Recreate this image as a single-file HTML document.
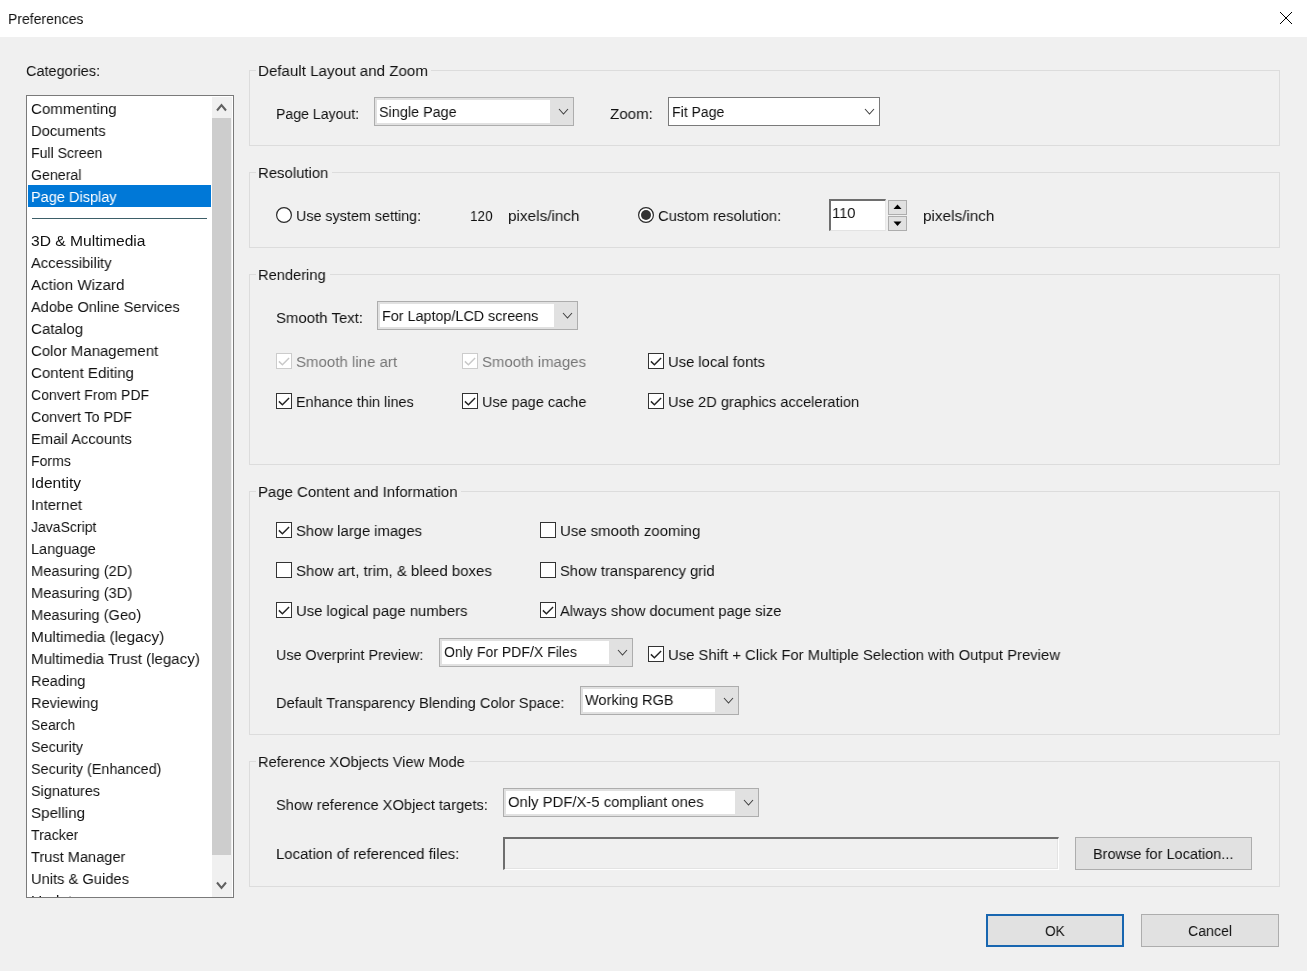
<!DOCTYPE html>
<html><head><meta charset="utf-8"><style>
html,body{margin:0;padding:0;}
body{width:1307px;height:971px;background:#f0f0f0;position:relative;overflow:hidden;font-family:"Liberation Sans",sans-serif;}
.a{position:absolute;box-sizing:border-box;}
.t{position:absolute;white-space:nowrap;will-change:transform;font-size:15px;line-height:20px;transform-origin:0 0;}
svg.a{display:block;}
</style></head><body>
<div class="a" style="left:0px;top:0px;width:1307px;height:37px;background:#ffffff;"></div>
<div class="t" style="left:8.20px;top:9.40px;color:#111111;font-size:15.5px;transform:scaleX(0.9024);">Preferences</div>
<svg class="a" style="left:1279px;top:11px" width="14" height="14" viewBox="0 0 14 14"><path d="M1 1 L13 13 M13 1 L1 13" stroke="#000" stroke-width="1"/></svg>
<div class="t" style="left:26.10px;top:61.40px;color:#111111;font-size:15.5px;transform:scaleX(0.9342);">Categories:</div>
<div class="a" style="left:26px;top:95px;width:208px;height:803px;background:#ffffff;border:1px solid #7a7a7a;"></div>
<div class="a" style="left:27px;top:96px;width:206px;height:801px;overflow:hidden">
<div class="a" style="left:1px;top:89px;width:183px;height:22px;background:#0078d7;"></div>
<div class="t" style="left:4.00px;top:3.40px;color:#111111;font-size:15.5px;transform:scaleX(0.9739);">Commenting</div>
<div class="t" style="left:4.00px;top:25.40px;color:#111111;font-size:15.5px;transform:scaleX(0.9519);">Documents</div>
<div class="t" style="left:4.00px;top:47.40px;color:#111111;font-size:15.5px;transform:scaleX(0.9103);">Full Screen</div>
<div class="t" style="left:4.00px;top:69.40px;color:#111111;font-size:15.5px;transform:scaleX(0.9145);">General</div>
<div class="t" style="left:4.00px;top:91.40px;color:#ffffff;font-size:15.5px;transform:scaleX(0.9370);">Page Display</div>
<div class="a" style="left:5px;top:122px;width:175px;height:1px;background:#3d5e68;"></div>
<div class="t" style="left:4.00px;top:135.40px;color:#111111;font-size:15.5px;transform:scaleX(1.0070);">3D &amp; Multimedia</div>
<div class="t" style="left:4.00px;top:157.40px;color:#111111;font-size:15.5px;transform:scaleX(0.9541);">Accessibility</div>
<div class="t" style="left:4.00px;top:179.40px;color:#111111;font-size:15.5px;transform:scaleX(0.9771);">Action Wizard</div>
<div class="t" style="left:4.00px;top:201.40px;color:#111111;font-size:15.5px;transform:scaleX(0.9430);">Adobe Online Services</div>
<div class="t" style="left:4.00px;top:223.40px;color:#111111;font-size:15.5px;transform:scaleX(0.9755);">Catalog</div>
<div class="t" style="left:4.00px;top:245.40px;color:#111111;font-size:15.5px;transform:scaleX(0.9647);">Color Management</div>
<div class="t" style="left:4.00px;top:267.40px;color:#111111;font-size:15.5px;transform:scaleX(0.9717);">Content Editing</div>
<div class="t" style="left:4.00px;top:289.40px;color:#111111;font-size:15.5px;transform:scaleX(0.9084);">Convert From PDF</div>
<div class="t" style="left:4.00px;top:311.40px;color:#111111;font-size:15.5px;transform:scaleX(0.9180);">Convert To PDF</div>
<div class="t" style="left:4.00px;top:333.40px;color:#111111;font-size:15.5px;transform:scaleX(0.9509);">Email Accounts</div>
<div class="t" style="left:4.00px;top:355.40px;color:#111111;font-size:15.5px;transform:scaleX(0.9068);">Forms</div>
<div class="t" style="left:4.00px;top:377.40px;color:#111111;font-size:15.5px;">Identity</div>
<div class="t" style="left:4.00px;top:399.40px;color:#111111;font-size:15.5px;transform:scaleX(0.9698);">Internet</div>
<div class="t" style="left:4.00px;top:421.40px;color:#111111;font-size:15.5px;transform:scaleX(0.9041);">JavaScript</div>
<div class="t" style="left:4.00px;top:443.40px;color:#111111;font-size:15.5px;transform:scaleX(0.9391);">Language</div>
<div class="t" style="left:4.00px;top:465.40px;color:#111111;font-size:15.5px;transform:scaleX(0.9477);">Measuring (2D)</div>
<div class="t" style="left:4.00px;top:487.40px;color:#111111;font-size:15.5px;transform:scaleX(0.9477);">Measuring (3D)</div>
<div class="t" style="left:4.00px;top:509.40px;color:#111111;font-size:15.5px;transform:scaleX(0.9466);">Measuring (Geo)</div>
<div class="t" style="left:4.00px;top:531.40px;color:#111111;font-size:15.5px;transform:scaleX(0.9910);">Multimedia (legacy)</div>
<div class="t" style="left:4.00px;top:553.40px;color:#111111;font-size:15.5px;transform:scaleX(0.9751);">Multimedia Trust (legacy)</div>
<div class="t" style="left:4.00px;top:575.40px;color:#111111;font-size:15.5px;transform:scaleX(0.9431);">Reading</div>
<div class="t" style="left:4.00px;top:597.40px;color:#111111;font-size:15.5px;transform:scaleX(0.9403);">Reviewing</div>
<div class="t" style="left:4.00px;top:619.40px;color:#111111;font-size:15.5px;transform:scaleX(0.9000);">Search</div>
<div class="t" style="left:4.00px;top:641.40px;color:#111111;font-size:15.5px;transform:scaleX(0.9286);">Security</div>
<div class="t" style="left:4.00px;top:663.40px;color:#111111;font-size:15.5px;transform:scaleX(0.9286);">Security (Enhanced)</div>
<div class="t" style="left:4.00px;top:685.40px;color:#111111;font-size:15.5px;transform:scaleX(0.9324);">Signatures</div>
<div class="t" style="left:4.00px;top:707.40px;color:#111111;font-size:15.5px;transform:scaleX(0.9800);">Spelling</div>
<div class="t" style="left:4.00px;top:729.40px;color:#111111;font-size:15.5px;transform:scaleX(0.9113);">Tracker</div>
<div class="t" style="left:4.00px;top:751.40px;color:#111111;font-size:15.5px;transform:scaleX(0.9416);">Trust Manager</div>
<div class="t" style="left:4.00px;top:773.40px;color:#111111;font-size:15.5px;transform:scaleX(0.9471);">Units &amp; Guides</div>
<div class="t" style="left:4.00px;top:795.40px;color:#111111;font-size:15.5px;">Updater</div>
<div class="a" style="left:185px;top:1px;width:20px;height:800px;background:#f0f0f0;"></div>
<div class="a" style="left:185px;top:22px;width:19px;height:737px;background:#cdcdcd;"></div>
<svg class="a" style="left:188px;top:6px" width="13" height="10" viewBox="0 0 13 10"><path d="M2 8.5 L6.5 3 L11 8.5" fill="none" stroke="#606060" stroke-width="2"/></svg>
<svg class="a" style="left:188px;top:785px" width="13" height="10" viewBox="0 0 13 10"><path d="M2 1.5 L6.5 7 L11 1.5" fill="none" stroke="#606060" stroke-width="2"/></svg>
</div>
<div class="a" style="left:249px;top:70px;width:1031px;height:76px;border:1px solid #dcdcdc;"></div>
<div class="a" style="left:256px;top:68px;width:175px;height:5px;background:#f0f0f0;"></div>
<div class="t" style="left:258.00px;top:61.30px;color:#111111;font-size:15.5px;transform:scaleX(0.9759);">Default Layout and Zoom</div>
<div class="t" style="left:276.10px;top:104.10px;color:#111111;font-size:15.5px;transform:scaleX(0.9099);">Page Layout:</div>
<div class="a" style="left:374px;top:97px;width:200px;height:29px;background:#e1e1e1;border:1px solid #adadad;"></div>
<div class="a" style="left:377px;top:100px;width:173px;height:23px;background:#ffffff;"></div>
<svg class="a" style="left:558.00px;top:107.50px" width="11" height="7" viewBox="0 0 11 7"><path d="M1 1 L5.5 6 L10 1" fill="none" stroke="#404040" stroke-width="1.1"/></svg>
<div class="t" style="left:378.90px;top:102.40px;color:#111111;font-size:15.5px;transform:scaleX(0.9286);">Single Page</div>
<div class="t" style="left:609.70px;top:104.10px;color:#111111;font-size:15.5px;transform:scaleX(0.9773);">Zoom:</div>
<div class="a" style="left:668px;top:97px;width:212px;height:29px;background:#ffffff;border:1px solid #7a7a7a;"></div>
<svg class="a" style="left:864.00px;top:107.50px" width="11" height="7" viewBox="0 0 11 7"><path d="M1 1 L5.5 6 L10 1" fill="none" stroke="#404040" stroke-width="1.1"/></svg>
<div class="t" style="left:671.60px;top:102.40px;color:#111111;font-size:15.5px;transform:scaleX(0.9069);">Fit Page</div>
<div class="a" style="left:249px;top:172px;width:1031px;height:76px;border:1px solid #dcdcdc;"></div>
<div class="a" style="left:256px;top:170px;width:76px;height:5px;background:#f0f0f0;"></div>
<div class="t" style="left:258.00px;top:163.30px;color:#111111;font-size:15.5px;transform:scaleX(0.9616);">Resolution</div>
<svg class="a" style="left:276px;top:207px" width="16" height="16" viewBox="0 0 16 16"><circle cx="8" cy="8" r="7.4" fill="#fff" stroke="#2a2a2a" stroke-width="1.2"/></svg>
<div class="t" style="left:296.00px;top:205.60px;color:#111111;font-size:15.5px;transform:scaleX(0.9244);">Use system setting:</div>
<div class="t" style="left:469.70px;top:205.60px;color:#111111;font-size:15.5px;transform:scaleX(0.8769);">120</div>
<div class="t" style="left:507.80px;top:205.60px;color:#111111;font-size:15.5px;transform:scaleX(0.9875);">pixels/inch</div>
<svg class="a" style="left:638px;top:207px" width="16" height="16" viewBox="0 0 16 16"><circle cx="8" cy="8" r="7.4" fill="#fff" stroke="#2a2a2a" stroke-width="1.2"/><circle cx="8" cy="8" r="5.0" fill="#333"/></svg>
<div class="t" style="left:658.00px;top:205.60px;color:#111111;font-size:15.5px;transform:scaleX(0.9535);">Custom resolution:</div>
<div class="a" style="left:829px;top:199px;width:57px;height:32px;background:#ffffff;border-top:2px solid #6e6e6e;border-left:2px solid #6e6e6e;border-right:1px solid #e8e8e8;border-bottom:1px solid #e3e3e3;"></div>
<div class="t" style="left:832.40px;top:203.00px;color:#111111;font-size:15.5px;transform:scaleX(0.9520);">110</div>
<div class="a" style="left:888px;top:200px;width:19px;height:15px;background:#e1e1e1;border:1px solid #adadad;"></div>
<div class="a" style="left:888px;top:216px;width:19px;height:15px;background:#e1e1e1;border:1px solid #adadad;"></div>
<svg class="a" style="left:891px;top:202px" width="13" height="9" viewBox="0 0 13 9"><path d="M2.5 7 L6.5 2.5 L10.5 7 Z" fill="#000"/></svg>
<svg class="a" style="left:891px;top:219px" width="13" height="9" viewBox="0 0 13 9"><path d="M2.5 2.5 L6.5 7 L10.5 2.5 Z" fill="#000"/></svg>
<div class="t" style="left:923.00px;top:205.60px;color:#111111;font-size:15.5px;transform:scaleX(0.9861);">pixels/inch</div>
<div class="a" style="left:249px;top:274px;width:1031px;height:191px;border:1px solid #dcdcdc;"></div>
<div class="a" style="left:256px;top:272px;width:74px;height:5px;background:#f0f0f0;"></div>
<div class="t" style="left:258.00px;top:265.30px;color:#111111;font-size:15.5px;transform:scaleX(0.9458);">Rendering</div>
<div class="t" style="left:275.70px;top:308.30px;color:#111111;font-size:15.5px;transform:scaleX(0.9656);">Smooth Text:</div>
<div class="a" style="left:377px;top:301px;width:201px;height:29px;background:#e1e1e1;border:1px solid #adadad;"></div>
<div class="a" style="left:380px;top:304px;width:174px;height:23px;background:#ffffff;"></div>
<svg class="a" style="left:562.00px;top:311.50px" width="11" height="7" viewBox="0 0 11 7"><path d="M1 1 L5.5 6 L10 1" fill="none" stroke="#404040" stroke-width="1.1"/></svg>
<div class="t" style="left:382.00px;top:306.40px;color:#111111;font-size:15.5px;transform:scaleX(0.9260);">For Laptop/LCD screens</div>
<svg class="a" style="left:276px;top:353px" width="16" height="16" viewBox="0 0 16 16"><rect x="0.5" y="0.5" width="15" height="15" fill="#fff" stroke="#cccccc" stroke-width="1"/><path d="M2.9 8.4 L6.4 11.7 L13.1 5.0" fill="none" stroke="#c8c8c8" stroke-width="1.45"/></svg>
<div class="t" style="left:296.00px;top:352.10px;color:#777777;font-size:15.5px;transform:scaleX(0.9695);">Smooth line art</div>
<svg class="a" style="left:462px;top:353px" width="16" height="16" viewBox="0 0 16 16"><rect x="0.5" y="0.5" width="15" height="15" fill="#fff" stroke="#cccccc" stroke-width="1"/><path d="M2.9 8.4 L6.4 11.7 L13.1 5.0" fill="none" stroke="#c8c8c8" stroke-width="1.45"/></svg>
<div class="t" style="left:482.00px;top:352.10px;color:#777777;font-size:15.5px;transform:scaleX(0.9657);">Smooth images</div>
<svg class="a" style="left:648px;top:353px" width="16" height="16" viewBox="0 0 16 16"><rect x="0.5" y="0.5" width="15" height="15" fill="#fff" stroke="#333333" stroke-width="1"/><path d="M2.9 8.4 L6.4 11.7 L13.1 5.0" fill="none" stroke="#222222" stroke-width="1.45"/></svg>
<div class="t" style="left:668.00px;top:352.10px;color:#111111;font-size:15.5px;transform:scaleX(0.9529);">Use local fonts</div>
<svg class="a" style="left:276px;top:393px" width="16" height="16" viewBox="0 0 16 16"><rect x="0.5" y="0.5" width="15" height="15" fill="#fff" stroke="#333333" stroke-width="1"/><path d="M2.9 8.4 L6.4 11.7 L13.1 5.0" fill="none" stroke="#222222" stroke-width="1.45"/></svg>
<div class="t" style="left:296.00px;top:392.10px;color:#111111;font-size:15.5px;transform:scaleX(0.9291);">Enhance thin lines</div>
<svg class="a" style="left:462px;top:393px" width="16" height="16" viewBox="0 0 16 16"><rect x="0.5" y="0.5" width="15" height="15" fill="#fff" stroke="#333333" stroke-width="1"/><path d="M2.9 8.4 L6.4 11.7 L13.1 5.0" fill="none" stroke="#222222" stroke-width="1.45"/></svg>
<div class="t" style="left:482.00px;top:392.10px;color:#111111;font-size:15.5px;transform:scaleX(0.9313);">Use page cache</div>
<svg class="a" style="left:648px;top:393px" width="16" height="16" viewBox="0 0 16 16"><rect x="0.5" y="0.5" width="15" height="15" fill="#fff" stroke="#333333" stroke-width="1"/><path d="M2.9 8.4 L6.4 11.7 L13.1 5.0" fill="none" stroke="#222222" stroke-width="1.45"/></svg>
<div class="t" style="left:668.00px;top:392.10px;color:#111111;font-size:15.5px;transform:scaleX(0.9443);">Use 2D graphics acceleration</div>
<div class="a" style="left:249px;top:491px;width:1031px;height:244px;border:1px solid #dcdcdc;"></div>
<div class="a" style="left:256px;top:489px;width:205px;height:5px;background:#f0f0f0;"></div>
<div class="t" style="left:258.00px;top:482.30px;color:#111111;font-size:15.5px;transform:scaleX(0.9647);">Page Content and Information</div>
<svg class="a" style="left:276px;top:522px" width="16" height="16" viewBox="0 0 16 16"><rect x="0.5" y="0.5" width="15" height="15" fill="#fff" stroke="#333333" stroke-width="1"/><path d="M2.9 8.4 L6.4 11.7 L13.1 5.0" fill="none" stroke="#222222" stroke-width="1.45"/></svg>
<div class="t" style="left:296.00px;top:521.10px;color:#111111;font-size:15.5px;transform:scaleX(0.9561);">Show large images</div>
<svg class="a" style="left:276px;top:562px" width="16" height="16" viewBox="0 0 16 16"><rect x="0.5" y="0.5" width="15" height="15" fill="#fff" stroke="#333333" stroke-width="1"/></svg>
<div class="t" style="left:296.00px;top:561.10px;color:#111111;font-size:15.5px;transform:scaleX(0.9675);">Show art, trim, &amp; bleed boxes</div>
<svg class="a" style="left:276px;top:602px" width="16" height="16" viewBox="0 0 16 16"><rect x="0.5" y="0.5" width="15" height="15" fill="#fff" stroke="#333333" stroke-width="1"/><path d="M2.9 8.4 L6.4 11.7 L13.1 5.0" fill="none" stroke="#222222" stroke-width="1.45"/></svg>
<div class="t" style="left:296.00px;top:601.10px;color:#111111;font-size:15.5px;transform:scaleX(0.9567);">Use logical page numbers</div>
<svg class="a" style="left:540px;top:522px" width="16" height="16" viewBox="0 0 16 16"><rect x="0.5" y="0.5" width="15" height="15" fill="#fff" stroke="#333333" stroke-width="1"/></svg>
<div class="t" style="left:560.00px;top:521.10px;color:#111111;font-size:15.5px;transform:scaleX(0.9637);">Use smooth zooming</div>
<svg class="a" style="left:540px;top:562px" width="16" height="16" viewBox="0 0 16 16"><rect x="0.5" y="0.5" width="15" height="15" fill="#fff" stroke="#333333" stroke-width="1"/></svg>
<div class="t" style="left:560.00px;top:561.10px;color:#111111;font-size:15.5px;transform:scaleX(0.9491);">Show transparency grid</div>
<svg class="a" style="left:540px;top:602px" width="16" height="16" viewBox="0 0 16 16"><rect x="0.5" y="0.5" width="15" height="15" fill="#fff" stroke="#333333" stroke-width="1"/><path d="M2.9 8.4 L6.4 11.7 L13.1 5.0" fill="none" stroke="#222222" stroke-width="1.45"/></svg>
<div class="t" style="left:560.00px;top:601.10px;color:#111111;font-size:15.5px;transform:scaleX(0.9519);">Always show document page size</div>
<div class="t" style="left:276.10px;top:645.10px;color:#111111;font-size:15.5px;transform:scaleX(0.9252);">Use Overprint Preview:</div>
<div class="a" style="left:439px;top:638px;width:194px;height:29px;background:#e1e1e1;border:1px solid #adadad;"></div>
<div class="a" style="left:442px;top:641px;width:167px;height:23px;background:#ffffff;"></div>
<svg class="a" style="left:617.00px;top:648.50px" width="11" height="7" viewBox="0 0 11 7"><path d="M1 1 L5.5 6 L10 1" fill="none" stroke="#404040" stroke-width="1.1"/></svg>
<div class="t" style="left:443.80px;top:642.40px;color:#111111;font-size:15.5px;transform:scaleX(0.9075);">Only For PDF/X Files</div>
<svg class="a" style="left:648px;top:646px" width="16" height="16" viewBox="0 0 16 16"><rect x="0.5" y="0.5" width="15" height="15" fill="#fff" stroke="#333333" stroke-width="1"/><path d="M2.9 8.4 L6.4 11.7 L13.1 5.0" fill="none" stroke="#222222" stroke-width="1.45"/></svg>
<div class="t" style="left:668.00px;top:645.10px;color:#111111;font-size:15.5px;transform:scaleX(0.9569);">Use Shift + Click For Multiple Selection with Output Preview</div>
<div class="t" style="left:276.10px;top:693.30px;color:#111111;font-size:15.5px;transform:scaleX(0.9428);">Default Transparency Blending Color Space:</div>
<div class="a" style="left:580px;top:686px;width:159px;height:29px;background:#e1e1e1;border:1px solid #adadad;"></div>
<div class="a" style="left:583px;top:689px;width:132px;height:23px;background:#ffffff;"></div>
<svg class="a" style="left:723.00px;top:696.50px" width="11" height="7" viewBox="0 0 11 7"><path d="M1 1 L5.5 6 L10 1" fill="none" stroke="#404040" stroke-width="1.1"/></svg>
<div class="t" style="left:584.90px;top:690.40px;color:#111111;font-size:15.5px;transform:scaleX(0.9383);">Working RGB</div>
<div class="a" style="left:249px;top:761px;width:1031px;height:126px;border:1px solid #dcdcdc;"></div>
<div class="a" style="left:256px;top:759px;width:213px;height:5px;background:#f0f0f0;"></div>
<div class="t" style="left:258.00px;top:752.30px;color:#111111;font-size:15.5px;transform:scaleX(0.9423);">Reference XObjects View Mode</div>
<div class="t" style="left:275.80px;top:795.10px;color:#111111;font-size:15.5px;transform:scaleX(0.9455);">Show reference XObject targets:</div>
<div class="a" style="left:503px;top:788px;width:256px;height:29px;background:#e1e1e1;border:1px solid #adadad;"></div>
<div class="a" style="left:506px;top:791px;width:229px;height:23px;background:#ffffff;"></div>
<svg class="a" style="left:743.00px;top:798.50px" width="11" height="7" viewBox="0 0 11 7"><path d="M1 1 L5.5 6 L10 1" fill="none" stroke="#404040" stroke-width="1.1"/></svg>
<div class="t" style="left:507.80px;top:792.40px;color:#111111;font-size:15.5px;transform:scaleX(0.9578);">Only PDF/X-5 compliant ones</div>
<div class="t" style="left:275.80px;top:844.40px;color:#111111;font-size:15.5px;transform:scaleX(0.9634);">Location of referenced files:</div>
<div class="a" style="left:503px;top:837px;width:556px;height:33px;background:#f0f0f0;border-top:2px solid #6e6e6e;border-left:2px solid #6e6e6e;border-right:1px solid #ffffff;border-bottom:1px solid #ffffff;box-shadow:inset -1px -1px 0 #e3e3e3;"></div>
<div class="a" style="left:1075px;top:837px;width:177px;height:33px;background:#e1e1e1;border:1px solid #adadad;"></div>
<div class="t" style="left:1093.20px;top:844.20px;color:#111111;font-size:15.5px;transform:scaleX(0.9367);">Browse for Location...</div>
<div class="a" style="left:986px;top:914px;width:138px;height:33px;background:#e1e1e1;border:2px solid #1866b0;"></div>
<div class="t" style="left:1045.00px;top:921.30px;color:#111111;font-size:15.5px;transform:scaleX(0.8826);">OK</div>
<div class="a" style="left:1141px;top:914px;width:138px;height:33px;background:#e1e1e1;border:1px solid #adadad;"></div>
<div class="t" style="left:1187.90px;top:921.10px;color:#111111;font-size:15.5px;transform:scaleX(0.9125);">Cancel</div>
</body></html>
